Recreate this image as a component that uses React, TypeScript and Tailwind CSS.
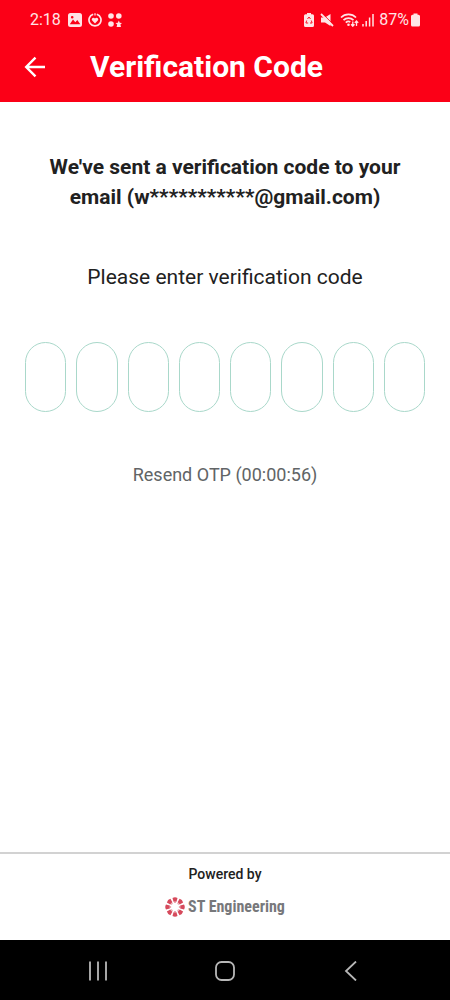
import React, { useRef, useState } from 'react';

const CODE_LENGTH = 8;

const StatusBar: React.FC = () => (
  <div className="flex h-10 items-center justify-between px-[30px] text-[#ffe4e6]">
    <div className="flex items-center gap-[6px]">
      <span className="mr-px text-[16px] leading-5">2:18</span>
      <svg width="14" height="14" viewBox="0 0 14 14" aria-hidden="true">
        <path
          fill="currentColor"
          fillRule="evenodd"
          d="M2.500 0h9A2.500 2.500 0 0 1 14 2.500v9a2.500 2.500 0 0 1-2.500 2.500h-9A2.500 2.500 0 0 1 0 11.500v-9A2.500 2.500 0 0 1 2.500 0zM1.800 11.300h10.500L9.300 7 7.300 9.300 5 6.500zM4.200 3a1.300 1.300 0 1 0 .01 2.600A1.300 1.300 0 0 0 4.200 3z"
        />
      </svg>
      <svg width="14" height="14" viewBox="0 0 14 14" aria-hidden="true">
        <path d="M5.200 1.200a6 6 0 1 0 3.600 0" fill="none" stroke="currentColor" strokeWidth="1.700" />
        <path d="M7 .3v2.200" stroke="currentColor" strokeWidth="1.300" />
        <path
          fill="currentColor"
          d="M7 10.400 4.200 7.600a1.700 1.700 0 0 1 0-2.300c.8-.8 2-.8 2.800.2.800-1 2-1 2.800-.2a1.700 1.700 0 0 1 0 2.300z"
        />
      </svg>
      <svg width="14" height="14" viewBox="0 0 14 14" fill="currentColor" aria-hidden="true">
        <circle cx="3" cy="3" r="2.800" />
        <circle cx="10.800" cy="3" r="2.800" />
        <circle cx="3" cy="11" r="2.800" />
        <path d="m10.800 7.500 1 2.200 2.300.3-1.700 1.500.6 2.500h-4.400l.6-2.500L7.500 10l2.300-.3z" />
      </svg>
    </div>

    <div className="flex items-center">
      <svg className="mr-[6px]" width="10" height="14" viewBox="0 0 10 14" aria-hidden="true">
        <path
          fill="currentColor"
          d="M3 0h4v1.300h1.500A1.500 1.500 0 0 1 10 2.800v9.700A1.500 1.500 0 0 1 8.500 14h-7A1.500 1.500 0 0 1 0 12.500V2.800a1.500 1.500 0 0 1 1.500-1.500H3z"
        />
        <path
          d="M3.500 6 5 4l1.500 2M7.300 7.500l.8 2.500H6M4.200 10H1.900l.8-2.500"
          fill="none"
          stroke="#fb0017"
          strokeWidth="0.900"
        />
      </svg>
      <svg className="mr-[6px]" width="14" height="14" viewBox="0 0 14 14" aria-hidden="true">
        <path fill="currentColor" d="M1 4.500h4L10.500 1v12L5 9.500H1z" />
        <path d="M2.500.7 13.500 11.700" stroke="#fb0017" strokeWidth="1" />
        <path d="m1 1 12 12" stroke="currentColor" strokeWidth="1.800" />
      </svg>
      <svg className="mr-[3px]" width="19" height="14" viewBox="0 0 19 14" fill="none" stroke="currentColor" aria-hidden="true">
        <path d="M1 4.500a10.500 10.500 0 0 1 15 0M3.500 7.200a7 7 0 0 1 10 0M5.800 9.700a4 4 0 0 1 4.500-.8" strokeWidth="1.700" />
        <circle cx="8.500" cy="11.800" r="1.300" fill="currentColor" stroke="none" />
        <path d="M12.800 8.500v4.500m-1.700-1.700 1.700 1.900 1.700-1.900M16.500 13V8m-1.700 1.900L16.500 8l1.700 1.900" strokeWidth="1.300" />
      </svg>
      <svg className="mr-[5px]" width="12" height="14" viewBox="0 0 12 14" stroke="currentColor" strokeWidth="1.500" aria-hidden="true">
        <path d="M1 11v2.500M4.200 8v5.500M7.600 4.500v9M11 1v12.500" />
      </svg>
      <span className="text-[16px] leading-5">87%</span>
      <svg className="ml-[2px]" width="9" height="14" viewBox="0 0 9 14" fill="currentColor" aria-hidden="true">
        <path d="M2.500.5h4v1.300h1A1.500 1.500 0 0 1 9 3.300v8.700a1.500 1.500 0 0 1-1.500 1.500h-6A1.500 1.500 0 0 1 0 12V3.300a1.500 1.500 0 0 1 1.500-1.500h1z" />
      </svg>
    </div>
  </div>
);

const petals = [0, 45, 90, 135, 180, 225, 270, 315];

const Logo: React.FC = () => (
  <div className="flex items-center justify-center gap-[3px]">
    <svg width="20" height="20" viewBox="0 0 20 20" aria-hidden="true">
      {petals.map((angle) => (
        <g key={angle} transform={`rotate(${angle} 10 10)`}>
          <path d="M7.500 1Q10-.5 12.500 1L11.500 4.800h-3z" fill="#d64a5c" />
          <path d="M9 4.800h2v1.300H9z" fill="#eba8b0" />
        </g>
      ))}
    </svg>
    <span className="font-['Roboto_Condensed','Liberation_Sans_Narrow',Roboto,sans-serif] text-[16px] font-bold leading-5 text-[#77787b]">
      ST Engineering
    </span>
  </div>
);

const CodeInputs: React.FC = () => {
  const [digits, setDigits] = useState<string[]>(Array(CODE_LENGTH).fill(''));
  const refs = useRef<(HTMLInputElement | null)[]>([]);

  const handleChange = (index: number, value: string) => {
    const digit = value.replace(/\D/g, '').slice(-1);
    setDigits((prev) => prev.map((d, i) => (i === index ? digit : d)));
    if (digit) refs.current[index + 1]?.focus();
  };

  const handleKeyDown = (index: number, e: React.KeyboardEvent) => {
    if (e.key === 'Backspace' && !digits[index]) refs.current[index - 1]?.focus();
  };

  return (
    <div className="grid grid-cols-8 gap-[10px]">
      {digits.map((digit, i) => (
        <input
          key={i}
          ref={(el) => {
            refs.current[i] = el;
          }}
          type="text"
          inputMode="numeric"
          aria-label={`Digit ${i + 1}`}
          value={digit}
          onChange={(e) => handleChange(i, e.target.value)}
          onKeyDown={(e) => handleKeyDown(i, e)}
          className="h-[70px] w-full min-w-0 rounded-full border border-[#a9d8ca] bg-white text-center text-xl text-[#212121] outline-none focus:border-[#4db596]"
        />
      ))}
    </div>
  );
};

export default function App() {
  return (
    <div className="flex min-h-screen flex-col bg-white font-[Roboto,sans-serif] text-[#212121]">
      <header className="bg-[#fb0017] text-white">
        <StatusBar />
        <div className="flex items-center gap-[44px] px-6 pb-[17px] pt-[9px]">
          <button type="button" aria-label="Back" className="cursor-pointer">
            <svg width="22" height="22" viewBox="0 0 22 22" fill="none" stroke="currentColor" strokeWidth="2.400" aria-hidden="true">
              <path d="M21 11H2.500M11.500 1.700 2.200 11l9.300 9.300" />
            </svg>
          </button>
          <h1 className="text-[30px] font-bold leading-9">Verification Code</h1>
        </div>
      </header>

      <main className="flex grow flex-col px-[25px] pt-[50px] text-center">
        <p className="text-[21px] font-bold leading-[30px]">
          We've sent a verification code to your
          <br />
          email (w***********@gmail.com)
        </p>
        <p className="my-[50px] text-[21px] leading-[30px]">Please enter verification code</p>
        <CodeInputs />
        <div className="mt-[50px]">
          <button type="button" disabled className="text-[18px] leading-[26px] text-[#616466]">
            Resend OTP (00:00:56)
          </button>
        </div>
      </main>

      <footer className="border-t-2 border-[#d2d2d2] pb-[23px] pt-[10px] text-center">
        <p className="mb-[13px] text-[14px] font-medium leading-5">Powered by</p>
        <Logo />
      </footer>

      <nav className="flex h-[60px] items-center justify-between bg-black px-[88px] pt-[2px] text-[#b8b8b8]">
        <button type="button" aria-label="Recent apps">
          <svg width="20" height="20" viewBox="0 0 20 20" stroke="currentColor" strokeWidth="1.800" aria-hidden="true">
            <path d="M2 .5v19M10 .5v19M18 .5v19" />
          </svg>
        </button>
        <button type="button" aria-label="Home">
          <svg width="20" height="20" viewBox="0 0 20 20" fill="none" stroke="currentColor" strokeWidth="1.800" aria-hidden="true">
            <rect x="1" y="1" width="18" height="18" rx="5.500" />
          </svg>
        </button>
        <button type="button" aria-label="Back to previous screen">
          <svg width="20" height="20" viewBox="0 0 20 20" fill="none" stroke="currentColor" strokeWidth="1.800" aria-hidden="true">
            <path d="M14 .5 4 10l10 9.500" />
          </svg>
        </button>
      </nav>
    </div>
  );
}
